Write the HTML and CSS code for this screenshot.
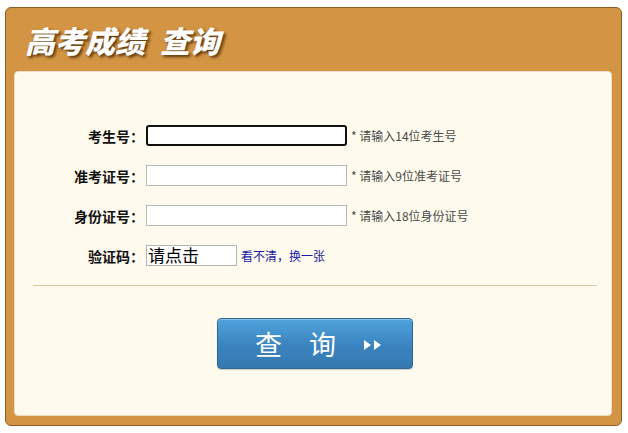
FILE: index.html
```html
<!DOCTYPE html>
<html lang="zh-CN">
<head>
  <meta charset="UTF-8" />
  <title>高考成绩查询</title>
  <link rel="stylesheet" href="styles.css">
</head>
<body>
  <div class="frame">
    <div class="title">高考成绩<span class="title-gap">查询</span></div>
    <div class="panel">
      <form class="form">
        <div class="row">
          <label class="label">考生号：</label>
          <input class="field focus" type="text" />
          <span class="hint">* 请输入14位考生号</span>
        </div>
        <div class="row">
          <label class="label">准考证号：</label>
          <input class="field" type="text" />
          <span class="hint">* 请输入9位准考证号</span>
        </div>
        <div class="row">
          <label class="label">身份证号：</label>
          <input class="field" type="text" />
          <span class="hint">* 请输入18位身份证号</span>
        </div>
        <div class="row">
          <label class="label">验证码：</label>
          <div class="captcha">请点击</div>
          <a class="refresh" href="#">看不清，换一张</a>
        </div>
      </form>
      <div class="divider"></div>
      <div class="actions">
        <button class="submit" type="button">
          <span>查</span><span>询</span>
          <svg class="arrows" width="20" height="12" viewBox="0 0 20 12">
            <polygon points="1,1 8,6 1,11" fill="#fff"/>
            <polygon points="11,1 18,6 11,11" fill="#fff"/>
          </svg>
        </button>
      </div>
    </div>
  </div>
</body>
</html>
```

FILE: styles.css
```css
body {
  margin: 0;
  padding: 7px 6px 7px 5px;
  background: #fff;
  font-family: "Noto Sans CJK SC", "Noto Sans", sans-serif;
}
.frame {
  height: 417px;
  background: #d39543;
  border: 1px solid #8e5d27;
  border-radius: 6px;
  display: flex;
  flex-direction: column;
}
.title {
  height: 63px;
  display: flex;
  align-items: center;
  padding-left: 19px;
  color: #fff;
  font-size: 30px;
  font-weight: 900;
  font-style: italic;
  text-shadow: 2px 2px 3px rgba(60, 30, 0, 0.8);
}
.title-gap {
  margin-left: 15px;
}
.panel {
  flex: 1;
  margin: 0 9px 9px 8px;
  background: #fefaed;
  border: 1px solid #e9dcc0;
  border-radius: 4px;
}
.form {
  padding-top: 53px;
  margin: 0;
}
.row {
  display: flex;
  align-items: center;
  height: 21px;
  margin-bottom: 19px;
}
.label {
  width: 129px;
  text-align: right;
  font-size: 14px;
  font-weight: bold;
  color: #111;
  margin-right: 2px;
}
.field {
  box-sizing: border-box;
  width: 201px;
  height: 21px;
  margin: 0;
  padding: 0 3px;
  border: 1px solid #b9b9b9;
  background: #fff;
  outline: none;
}
.field.focus {
  border: 2px solid #111;
  border-radius: 3px;
}
.hint {
  margin-left: 4px;
  font-size: 12px;
  color: #4a4a4a;
}
.captcha {
  box-sizing: border-box;
  width: 91px;
  height: 21px;
  border: 1px solid #b5b5b5;
  background: #fff;
  font-size: 17px;
  line-height: 18px;
  padding-left: 1px;
  color: #000;
}
.refresh {
  margin-left: 4px;
  font-size: 12px;
  color: #1a1aa6;
  text-decoration: none;
}
.divider {
  height: 1px;
  margin: 10px 14px 0 18px;
  background: #dcc9a3;
}
.actions {
  display: flex;
  justify-content: center;
  padding: 32px 0 0 4px;
}
.submit {
  width: 196px;
  height: 51px;
  border: 1px solid #2c6a99;
  border-radius: 4px;
  background: linear-gradient(#4fa3dc, #3a83bf 55%, #3779b0);
  box-shadow: inset 0 1px 0 rgba(255, 255, 255, 0.35), 0 1px 1px rgba(0, 0, 0, 0.2);
  color: #fff;
  font-family: "Noto Sans CJK SC", sans-serif;
  font-size: 27px;
  display: flex;
  align-items: center;
  justify-content: center;
  padding: 0 0 0 8px;
  cursor: pointer;
}
.submit span {
  margin-right: 27px;
}
.arrows {
  display: block;
  margin-top: 2px;
}
```
